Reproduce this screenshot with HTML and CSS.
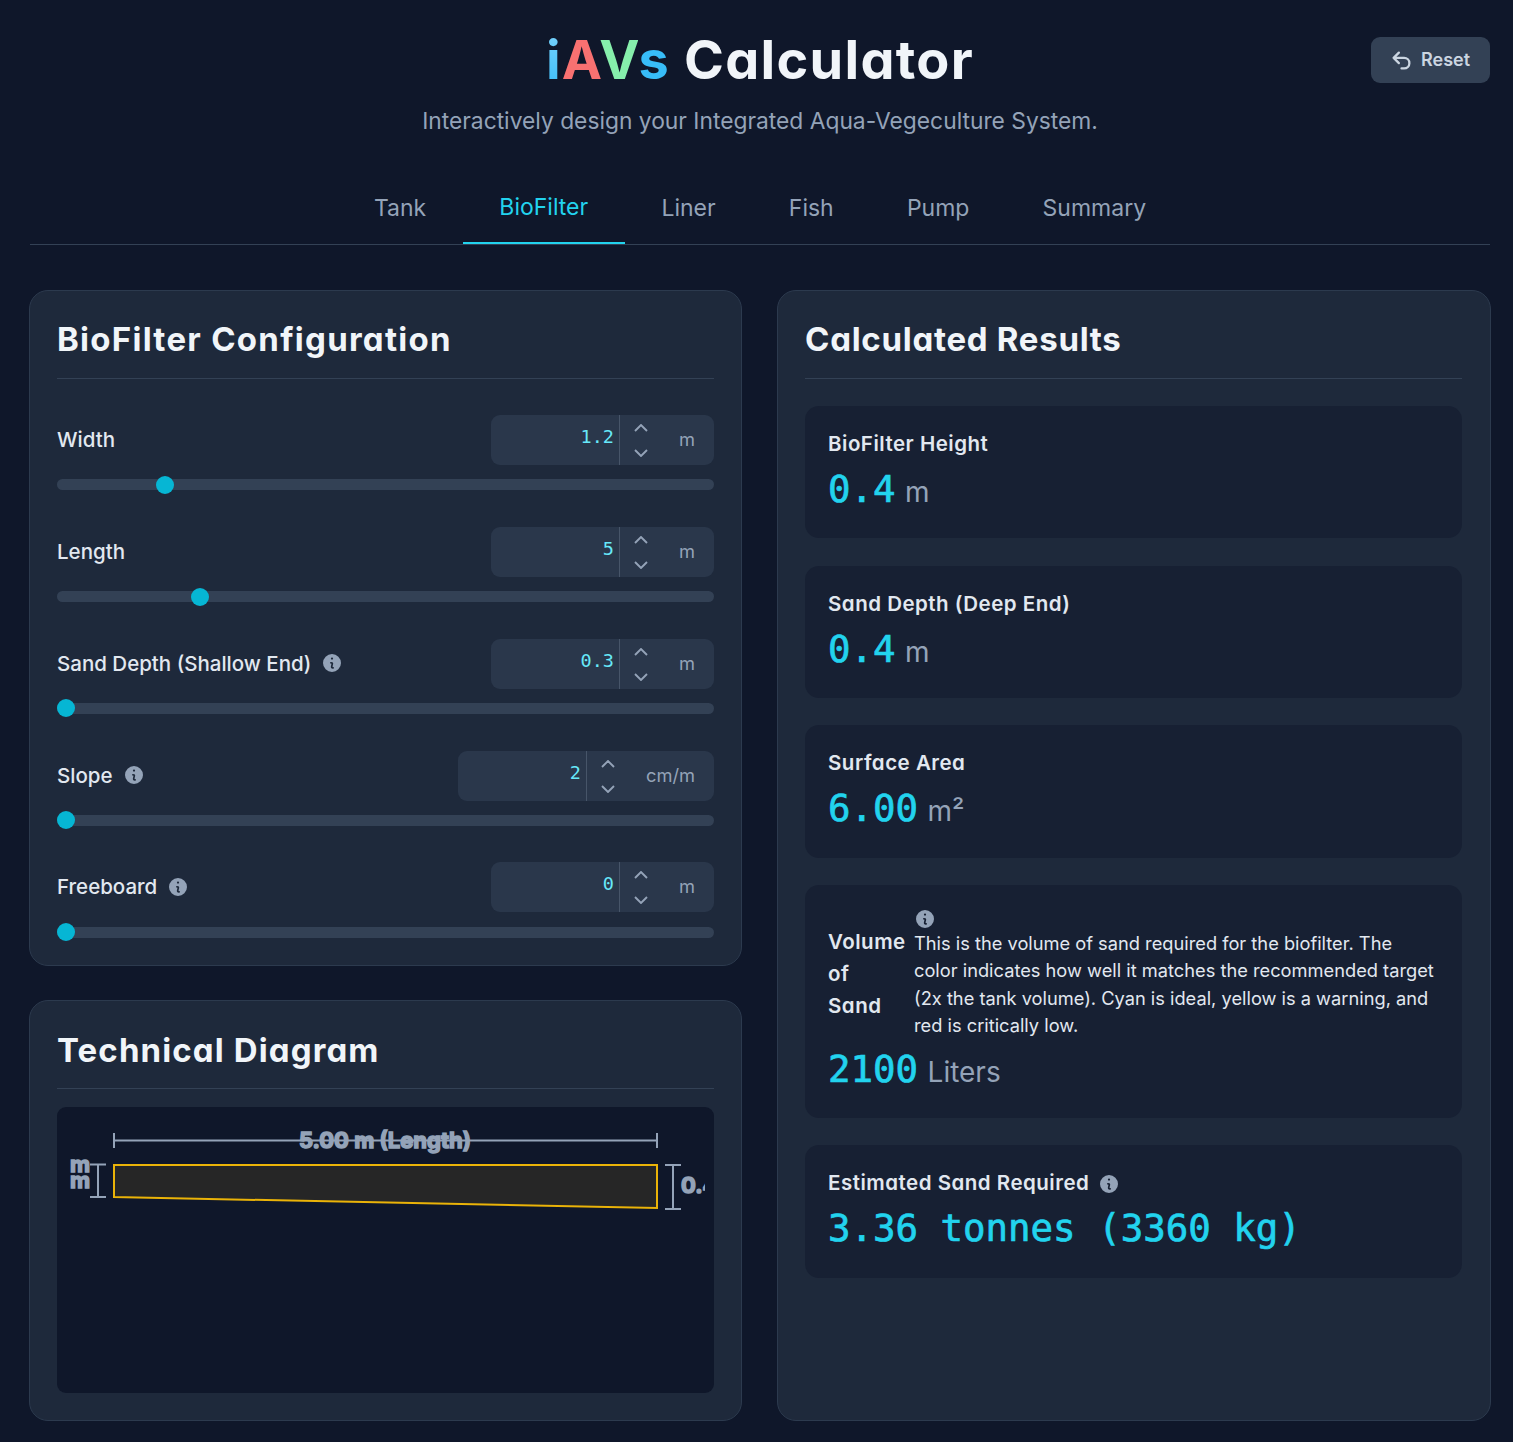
FILE: index.html
```html
<!DOCTYPE html>
<html lang="en">
<head>
<meta charset="utf-8">
<title>iAVs Calculator</title>
<link rel="stylesheet" href="styles.css">
</head>
<body>
<svg class="defs" width="0" height="0" aria-hidden="true">
  <symbol id="info" viewBox="2 2 16 16"><path fill="currentColor" fill-rule="evenodd" d="M18 10a8 8 0 1 1-16 0 8 8 0 0 1 16 0Zm-7-4a1 1 0 1 1-2 0 1 1 0 0 1 2 0ZM9 9a.75.75 0 0 0 0 1.5h.253a.25.25 0 0 1 .244.304l-.459 2.066A1.75 1.75 0 0 0 10.747 15H11a.75.75 0 0 0 0-1.5h-.253a.25.25 0 0 1-.244-.304l.459-2.066A1.75 1.75 0 0 0 9.253 9H9Z"/></symbol>
  <symbol id="up" viewBox="0 0 14 8"><path d="M1 7l6-6 6 6" fill="none" stroke="currentColor" stroke-width="1.9"/></symbol>
  <symbol id="down" viewBox="0 0 14 8"><path d="M1 1l6 6 6-6" fill="none" stroke="currentColor" stroke-width="1.9"/></symbol>
</svg>
<div class="app">
  <header class="header">
    <h1 class="title"><span class="g-i">i</span><span class="g-a">A</span><span class="g-v">V</span><span class="g-s">s</span> Calculator</h1>
    <p class="subtitle">Interactively design your Integrated Aqua-Vegeculture System.</p>
    <button class="reset" type="button">
      <svg class="reset-icon" viewBox="0 0 24 24"><path d="M9 15 3 9m0 0 6-6M3 9h12a6 6 0 0 1 0 12h-3" fill="none" stroke="currentColor" stroke-width="2.6" stroke-linecap="round" stroke-linejoin="round"/></svg>
      <span class="reset-text">Reset</span>
    </button>
  </header>
  <nav class="tabs">
    <a class="tab">Tank</a>
    <a class="tab active">BioFilter</a>
    <a class="tab">Liner</a>
    <a class="tab">Fish</a>
    <a class="tab">Pump</a>
    <a class="tab">Summary</a>
  </nav>
  <main class="grid">
    <div class="col">
      <section class="card config">
        <h2 class="card-title">BioFilter Configuration</h2>
        <div class="fields">
          <div class="field">
            <div class="field-top">
              <label class="label">Width</label>
              <div class="num"><input class="num-input" value="1.2"><div class="stepper"><svg class="chev"><use href="#up"/></svg><svg class="chev"><use href="#down"/></svg></div><span class="unit">m</span></div>
            </div>
            <input class="range" type="range" min="0" max="100" step="0.1" value="15.5">
          </div>
          <div class="field">
            <div class="field-top">
              <label class="label">Length</label>
              <div class="num"><input class="num-input" value="5"><div class="stepper"><svg class="chev"><use href="#up"/></svg><svg class="chev"><use href="#down"/></svg></div><span class="unit">m</span></div>
            </div>
            <input class="range" type="range" min="0" max="100" step="0.1" value="21">
          </div>
          <div class="field">
            <div class="field-top">
              <label class="label">Sand Depth (Shallow End) <svg class="info"><use href="#info"/></svg></label>
              <div class="num"><input class="num-input" value="0.3"><div class="stepper"><svg class="chev"><use href="#up"/></svg><svg class="chev"><use href="#down"/></svg></div><span class="unit">m</span></div>
            </div>
            <input class="range" type="range" min="0" max="100" step="0.1" value="0">
          </div>
          <div class="field">
            <div class="field-top">
              <label class="label">Slope <svg class="info"><use href="#info"/></svg></label>
              <div class="num"><input class="num-input" value="2"><div class="stepper"><svg class="chev"><use href="#up"/></svg><svg class="chev"><use href="#down"/></svg></div><span class="unit">cm/m</span></div>
            </div>
            <input class="range" type="range" min="0" max="100" step="0.1" value="0">
          </div>
          <div class="field">
            <div class="field-top">
              <label class="label">Freeboard <svg class="info"><use href="#info"/></svg></label>
              <div class="num"><input class="num-input" value="0"><div class="stepper"><svg class="chev"><use href="#up"/></svg><svg class="chev"><use href="#down"/></svg></div><span class="unit">m</span></div>
            </div>
            <input class="range" type="range" min="0" max="100" step="0.1" value="0">
          </div>
        </div>
      </section>
      <section class="card diagram-card">
        <h2 class="card-title">Technical Diagram</h2>
        <div class="diagram">
          <svg class="diagram-svg" viewBox="0 0 639 286" width="639" height="286">
            <g class="dim">
              <path d="M48 33.5H591M48 26V41M591 26V41"/>
              <path d="M32 57.5V90M24 57.5H40M24 90H40"/>
              <path d="M607 58V102M599 58H615M599 102H615"/>
            </g>
            <polygon class="tank" points="48,58 591,58 591,101 48,90"/>
            <text class="dim-text" x="319" y="41" text-anchor="middle">5.00 m (Length)</text>
            <text class="dim-text" x="4" y="65">m</text>
            <text class="dim-text" x="4" y="81">m</text>
            <text class="dim-text" x="615" y="86">0.4 m</text>
          </svg>
        </div>
      </section>
    </div>
    <section class="card results">
      <h2 class="card-title">Calculated Results</h2>
      <div class="result-list">
        <div class="result">
          <div class="r-label">BioFilter Height</div>
          <div class="r-value">0.4<span class="r-unit">m</span></div>
        </div>
        <div class="result">
          <div class="r-label">Sand Depth (Deep End)</div>
          <div class="r-value">0.4<span class="r-unit">m</span></div>
        </div>
        <div class="result">
          <div class="r-label">Surface Area</div>
          <div class="r-value">6.00<span class="r-unit">m²</span></div>
        </div>
        <div class="result">
          <div class="r-label vol-row">
            <span class="vol-name">Volume of Sand</span>
            <span class="vol-help"><svg class="info info-block"><use href="#info"/></svg><span class="vol-text">This is the volume of sand required for the biofilter. The color indicates how well it matches the recommended target (2x the tank volume). Cyan is ideal, yellow is a warning, and red is critically low.</span></span>
          </div>
          <div class="r-value vol-value">2100<span class="r-unit">Liters</span></div>
        </div>
        <div class="result">
          <div class="r-label">Estimated Sand Required <svg class="info"><use href="#info"/></svg></div>
          <div class="r-value">3.36 tonnes (3360 kg)</div>
        </div>
      </div>
    </section>
  </main>
</div>
</body>
</html>
```

FILE: styles.css
```css
* { box-sizing: border-box; }
html, body { margin: 0; height: 100%; }
body {
  background: #0f172a;
  color: #e2e8f0;
  font-family: Inter, "Liberation Sans", sans-serif;
}
.defs { position: absolute; }
.app { padding: 0 22px 0 29px; height: 1442px; }

.header { position: relative; text-align: center; padding-top: 26px; height: 158px; }
.title {
  margin: 0;
  font-size: 54px;
  line-height: 68px;
  font-weight: 700;
  letter-spacing: 1.3px;
  color: #f1f5f9;
  font-feature-settings: "cv11";
}
.g-i { background: linear-gradient(#7dd3fc, #38bdf8); -webkit-background-clip: text; background-clip: text; color: transparent; }
.g-a { color: #f87171; }
.g-v { background: linear-gradient(#86efac, #86efac); -webkit-background-clip: text; background-clip: text; color: transparent; }
.g-s { color: #38bdf8; }
.subtitle { margin: 11px 0 0; font-size: 22.8px; line-height: 32px; color: #94a3b8; }
.reset {
  position: absolute;
  top: 37px;
  right: 1px;
  width: 119px;
  height: 46px;
  display: flex;
  align-items: center;
  justify-content: center;
  gap: 9px;
  background: #334155;
  border: 0;
  border-radius: 9px;
  color: #cbd5e1;
  font: 600 18px Inter, sans-serif;
}
.reset-icon { width: 21px; height: 21px; }
.reset-text { margin-bottom: 2px; }

.tabs {
  display: flex;
  justify-content: center;
  height: 87px;
  margin: 0 1px;
  border-bottom: 1px solid #334155;
  align-items: flex-end;
}
.tab {
  padding: 0 36.6px 21px;
  font-size: 23px;
  line-height: 29px;
  color: #94a3b8;
}
.tab.active {
  color: #22d3ee;
  border-bottom: 2px solid #22d3ee;
  padding-bottom: 20px;
}

.grid {
  display: grid;
  grid-template-columns: 713px 714px;
  gap: 35px;
  margin-top: 45px;
}
.col { display: flex; flex-direction: column; gap: 34px; }
.card {
  background: #1e293b;
  border: 1px solid #2c3a4e;
  border-radius: 19px;
  padding: 28px 27px 0;
}
.config { height: 676px; }
.diagram-card { height: 421px; padding-top: 29px; }
.results { height: 1131px; padding-right: 28px; }
.card-title {
  margin: 0;
  padding-bottom: 19px;
  border-bottom: 1px solid #334155;
  font-size: 33px;
  line-height: 40px;
  font-weight: 700;
  letter-spacing: 1.27px;
  color: #f1f5f9;
  font-feature-settings: "cv11";
}
.diagram-card .card-title { padding-bottom: 18px; letter-spacing: 1.12px; }
.results .card-title { letter-spacing: .72px; }

.fields { margin-top: 36.2px; display: flex; flex-direction: column; gap: 37px; }
.field { height: 74.8px; }
.field-top { display: flex; justify-content: space-between; align-items: center; height: 50px; }
.label { font-size: 20.5px; font-weight: 500; color: #e2e8f0; display: flex; align-items: center; gap: 12px; padding-bottom: 1px; }
.info { width: 18px; height: 18px; color: #94a3b8; flex: none; vertical-align: -3px; }
.num {
  display: flex;
  align-items: stretch;
  height: 50px;
  background: #2a374b;
  border-radius: 9px;
  overflow: hidden;
}
.num-input {
  width: 128px;
  border: 0;
  background: transparent;
  text-align: right;
  padding: 0 5px 7px 0;
  color: #67e8f9;
  font: 18.5px "DejaVu Sans Mono", monospace;
  outline: none;
}
.stepper {
  width: 43px;
  border-left: 1px solid #475569;
  display: flex;
  flex-direction: column;
  align-items: center;
  justify-content: space-between;
  padding: 9px 0 8px;
  color: #94a3b8;
}
.chev { width: 14px; height: 8px; }
.unit {
  align-self: center;
  padding: 0 19px 2px 17px;
  font-size: 18.3px;
  color: #94a3b8;
  min-width: 52px;
  text-align: right;
}
.range {
  -webkit-appearance: none;
  appearance: none;
  display: block;
  width: 100%;
  height: 18px;
  margin: 10.7px 0 0;
  background: transparent;
}
.range::-webkit-slider-runnable-track {
  height: 11px;
  background: #334155;
  border-radius: 6px;
}
.range::-webkit-slider-thumb {
  -webkit-appearance: none;
  width: 18px;
  height: 18px;
  margin-top: -3.5px;
  border-radius: 50%;
  background: #06b6d4;
}

.diagram {
  margin-top: 18px;
  height: 286px;
  padding: 0 9px;
  background: #0f172a;
  border-radius: 9px;
}
.diagram-svg { display: block; overflow: hidden; }
.dim path { fill: none; stroke: #94a3b8; stroke-width: 2; }
.tank { fill: #262626; stroke: #eab308; stroke-width: 2; }
.dim-text {
  font: 700 22px Inter, sans-serif;
  fill: #94a3b8;
  stroke: #94a3b8;
  stroke-width: 1.5;
}

.result-list { margin-top: 27px; display: flex; flex-direction: column; gap: 27.3px; }
.result {
  background: #172033;
  border-radius: 14px;
  padding: 23px 23px 26.4px;
}
.r-label {
  font-size: 20.5px;
  font-weight: 600;
  letter-spacing: .5px;
  line-height: 30px;
  color: #e2e8f0;
  font-feature-settings: "cv11";
}
.r-label .info { margin-left: 5px; }
.r-value {
  margin-top: 7px;
  font: 37.4px/46px "DejaVu Sans Mono", monospace;
  -webkit-text-stroke: .7px #22d3ee;
  color: #22d3ee;
  white-space: nowrap;
}
.vol-value { margin-top: 6px; }
.r-unit { font: 28px Inter, sans-serif; -webkit-text-stroke: 0; color: #94a3b8; margin-left: 9.5px; }
.vol-row { display: flex; gap: 10px; align-items: center; }
.vol-name { line-height: 32px; width: 76px; flex: none; }
.vol-help { display: block; padding-top: 2px; }
.r-label .info-block { display: block; margin: 0 0 2px 2px; }
.vol-text {
  display: block;
  font-size: 18.25px;
  font-weight: 400;
  letter-spacing: 0;
  line-height: 27.4px;
  font-feature-settings: normal;
}
```
